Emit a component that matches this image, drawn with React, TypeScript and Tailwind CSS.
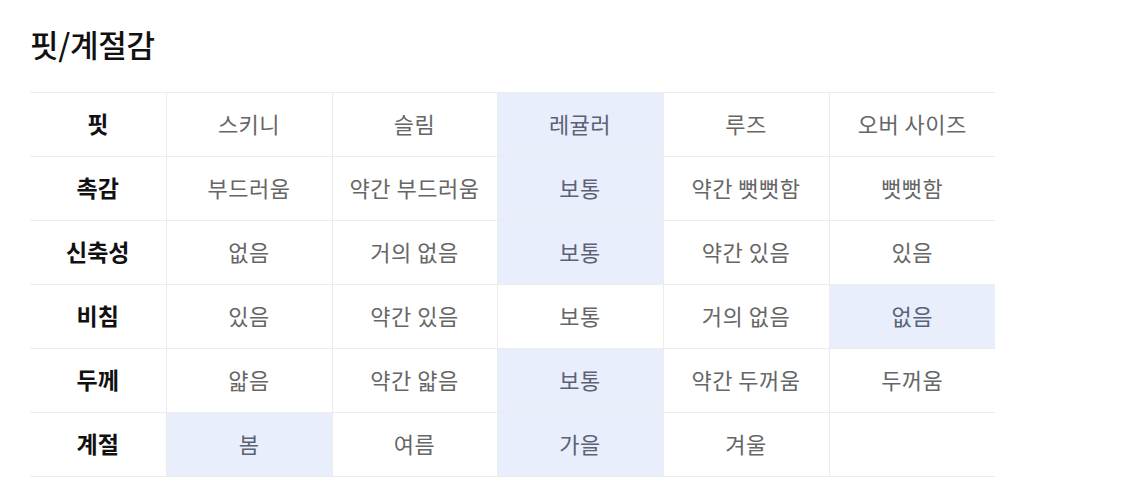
const rows: { label: string; cells: string[]; hi: number[] }[] = [
  { label: "핏", cells: ["스키니", "슬림", "레귤러", "루즈", "오버 사이즈"], hi: [2] },
  { label: "촉감", cells: ["부드러움", "약간 부드러움", "보통", "약간 뻣뻣함", "뻣뻣함"], hi: [2] },
  { label: "신축성", cells: ["없음", "거의 없음", "보통", "약간 있음", "있음"], hi: [2] },
  { label: "비침", cells: ["있음", "약간 있음", "보통", "거의 없음", "없음"], hi: [4] },
  { label: "두께", cells: ["얇음", "약간 얇음", "보통", "약간 두꺼움", "두꺼움"], hi: [2] },
  { label: "계절", cells: ["봄", "여름", "가을", "겨울", ""], hi: [0, 2] },
];

export default function App() {
  return (
    <div
      className="w-[1125px] h-[482px] bg-white pl-[30px] pt-[22px] overflow-hidden"
      style={{ fontFamily: '"Noto Sans CJK KR", "Noto Sans", sans-serif' }}
    >
      <h2 className="text-[31px] font-medium leading-[44px] text-[#111] tracking-[-0.3px]">
        핏/계절감
      </h2>
      <table className="mt-[26px] w-[965px] border-collapse table-fixed">
        <colgroup>
          <col className="w-[136px]" />
          <col className="w-[166px]" />
          <col className="w-[165px]" />
          <col className="w-[166px]" />
          <col className="w-[166px]" />
          <col className="w-[166px]" />
        </colgroup>
        <tbody>
          {rows.map((row) => (
            <tr key={row.label} className="h-[64px] border-t border-b border-[#ececec]">
              <td className="pb-[3px] text-center text-[23px] font-semibold text-[#111] border-r border-[#ececec]">
                {row.label}
              </td>
              {row.cells.map((cell, i) => {
                const on = row.hi.includes(i);
                return (
                  <td
                    key={i}
                    className={
                      (on ? "bg-[#e8eefc] text-[#5b6275] " : "text-[#666] ") +
                      (i < 4 ? "border-r border-[#ececec] " : "") +
                      "pb-[3px] text-center text-[22px] tracking-[0.5px]"
                    }
                  >
                    {cell}
                  </td>
                );
              })}
            </tr>
          ))}
        </tbody>
      </table>
    </div>
  );
}
